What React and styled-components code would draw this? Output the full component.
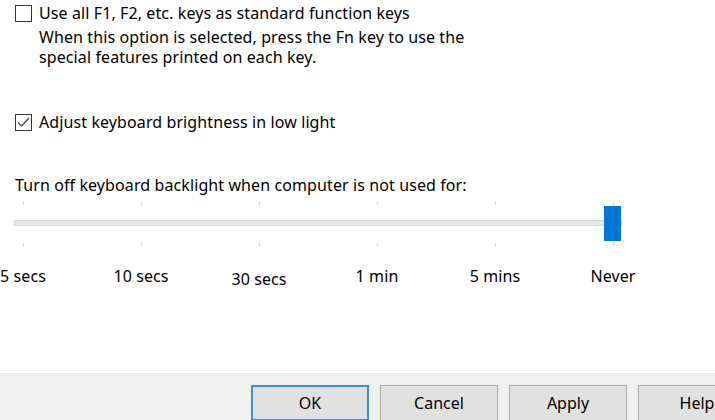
import React, { useState } from 'react'
import styled, { createGlobalStyle } from 'styled-components'

const Global = createGlobalStyle`
  html, body {
    margin: 0;
    padding: 0;
    background: #fff;
    overflow: hidden;
  }
  body {
    font-family: "Noto Sans", "Open Sans", sans-serif;
    font-size: 16px;
    letter-spacing: 0.1px;
    color: #000;
  }
`

const STOPS = ['5 secs', '10 secs', '30 secs', '1 min', '5 mins', 'Never']

function App() {
  const [fnKeys, setFnKeys] = useState(false)
  const [brightness, setBrightness] = useState(true)
  const [level] = useState(5)

  return (
    <Page>
      <Global />
      <Content>
        <CheckRow onClick={() => setFnKeys(!fnKeys)}>
          <Box><CheckMark checked={fnKeys} /></Box>
          <span>Use all F1, F2, etc. keys as standard function keys</span>
        </CheckRow>
        <Hint>
          When this option is selected, press the Fn key to use the<br />
          special features printed on each key.
        </Hint>

        <CheckRow $gap={45} onClick={() => setBrightness(!brightness)}>
          <Box><CheckMark checked={brightness} /></Box>
          <span>Adjust keyboard brightness in low light</span>
        </CheckRow>

        <Caption>Turn off keyboard backlight when computer is not used for:</Caption>

        <Slider>
          <Ticks>{STOPS.map(s => <Tick key={s} />)}</Ticks>
          <Track />
          <Ticks $bottom>{STOPS.map(s => <Tick key={s} />)}</Ticks>
          <Thumb style={{ left: 23 + level * 118 - 9 }} />
        </Slider>

        <Labels>
          {STOPS.map((s, i) => (
            <Label key={s} $drop={i === 2}>{s}</Label>
          ))}
        </Labels>
      </Content>

      <Footer>
        <Button $default>OK</Button>
        <Button>Cancel</Button>
        <Button>Apply</Button>
        <Button>Help</Button>
      </Footer>
    </Page>
  )
}

function CheckMark({ checked }) {
  if (!checked) return null
  return (
    <svg width="15" height="15" viewBox="0 0 15 15">
      <polyline points="2,7.5 5.5,11 13,3" fill="none" stroke="#4a4a4a" strokeWidth="1.3" />
    </svg>
  )
}

export default App

const Page = styled.div`
  height: 420px;
  display: flex;
  flex-direction: column;
`

const Content = styled.div`
  flex: 1;
  padding: 3px 0 0 15px;
  display: flex;
  flex-direction: column;
  align-items: flex-start;
`

const CheckRow = styled.label`
  display: flex;
  align-items: center;
  gap: 7px;
  line-height: 20px;
  margin-top: ${p => p.$gap || 0}px;
  cursor: default;
`

const Box = styled.span`
  width: 15px;
  height: 15px;
  border: 1px solid #333;
  background: #fff;
  display: flex;
  align-items: center;
  justify-content: center;
`

const Hint = styled.div`
  margin: 4px 0 0 24px;
  line-height: 20px;
`

const Caption = styled.div`
  margin-top: 43px;
  line-height: 20px;
`

const Slider = styled.div`
  position: relative;
  align-self: stretch;
  margin-left: -15px;
  padding-top: 7px;
  height: 44px;
`

const Ticks = styled.div`
  display: grid;
  grid-template-columns: repeat(6, 118px);
  margin-left: -36px;
  margin-top: ${p => (p.$bottom ? 17 : 0)}px;
  height: 3px;
`

const Tick = styled.span`
  justify-self: center;
  width: 1px;
  height: 3px;
  background: #d0d0d0;
`

const Track = styled.div`
  margin: 15px 0 0 14px;
  width: 606px;
  height: 4px;
  background: #e7e7e7;
  border: 1px solid #d9d9d9;
`

const Thumb = styled.div`
  position: absolute;
  top: 11px;
  width: 17px;
  height: 35px;
  background: #0078d7;
  box-sizing: border-box;
`

const Labels = styled.div`
  display: grid;
  grid-template-columns: repeat(6, 118px);
  margin: 20px 0 0 -51px;
  line-height: 20px;
`

const Label = styled.span`
  justify-self: center;
  position: relative;
  top: ${p => (p.$drop ? 3 : 0)}px;
`

const Footer = styled.div`
  height: 47px;
  background: #f0f0f0;
  border-top: 1px solid #e2e2e2;
  display: flex;
  gap: 11px;
  padding: 11px 0 0 251px;
  box-sizing: border-box;
  overflow: hidden;
  white-space: nowrap;
`

const Button = styled.button`
  flex: none;
  width: 118px;
  height: 36px;
  box-sizing: border-box;
  font: inherit;
  color: #000;
  background: #e1e1e1;
  border: ${p => (p.$default ? '2px solid #3d8ee0' : '1px solid #adadad')};
  padding: 0;
  line-height: 32px;
`
